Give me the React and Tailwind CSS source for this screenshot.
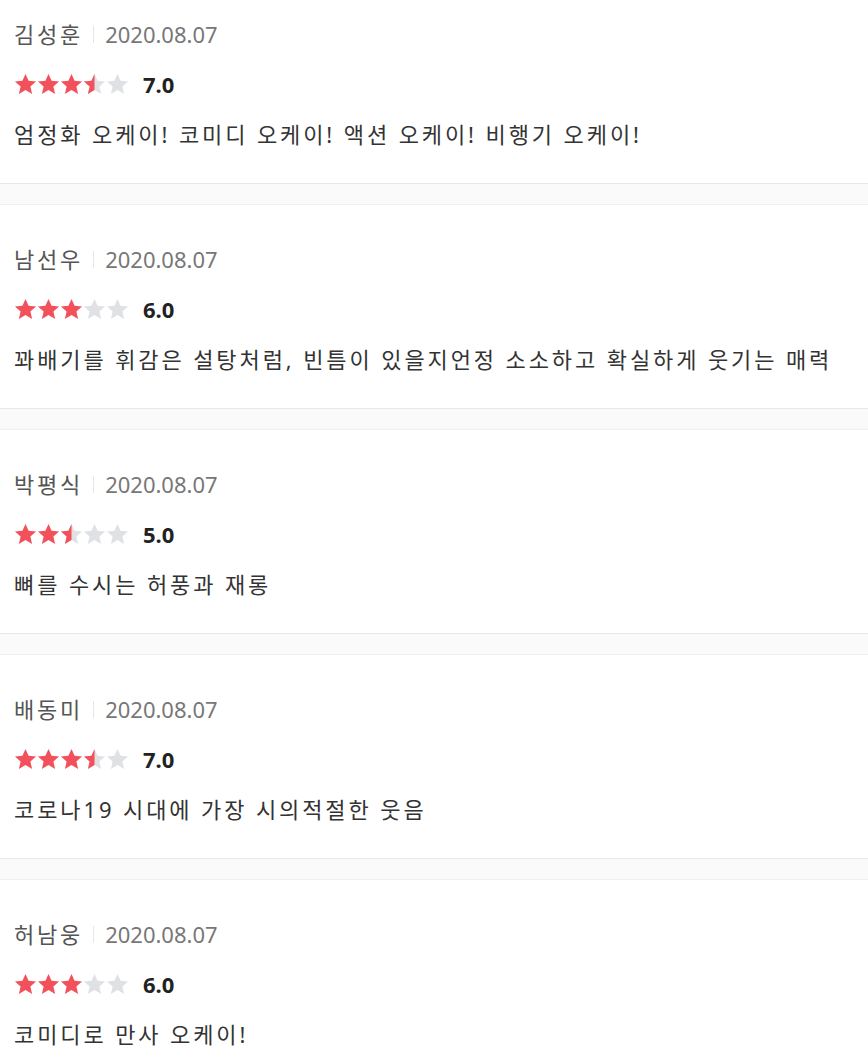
const reviews = [
  { name: "김성훈", date: "2020.08.07", score: 7, text: "엄정화 오케이! 코미디 오케이! 액션 오케이! 비행기 오케이!" },
  { name: "남선우", date: "2020.08.07", score: 6, text: "꽈배기를 휘감은 설탕처럼, 빈틈이 있을지언정 소소하고 확실하게 웃기는 매력" },
  { name: "박평식", date: "2020.08.07", score: 5, text: "뼈를 수시는 허풍과 재롱" },
  { name: "배동미", date: "2020.08.07", score: 7, text: "코로나19 시대에 가장 시의적절한 웃음" },
  { name: "허남웅", date: "2020.08.07", score: 6, text: "코미디로 만사 오케이!" },
];

const STAR = "M12 1l3.2 7.2 7.8.7-5.9 5.2 1.8 7.7L12 17.8l-6.9 4 1.8-7.7L1 8.9l7.8-.7z";

function Star({ fill, uid }) {
  // fill: 0, 0.5 or 1
  return (
    <svg width="23" height="23" viewBox="0 0 24 24" className="block">
      {fill === 0.5 && (
        <defs>
          <clipPath id={uid}>
            <rect x="0" y="0" width="12" height="24" />
          </clipPath>
        </defs>
      )}
      <path d={STAR} fill={fill === 1 ? "#f2505a" : "#dfe1e5"} />
      {fill === 0.5 && <path d={STAR} fill="#f2505a" clipPath={`url(#${uid})`} />}
    </svg>
  );
}

function Stars({ score, idx }) {
  const value = score / 2;
  return (
    <div className="flex items-center">
      {[1, 2, 3, 4, 5].map((i) => (
        <Star
          key={i}
          uid={`half-${idx}-${i}`}
          fill={value >= i ? 1 : value >= i - 0.5 ? 0.5 : 0}
        />
      ))}
    </div>
  );
}

function Review({ review, idx }) {
  return (
    <div className={`px-[14px] pb-[34px] ${idx === 0 ? "pt-[19px]" : "pt-[39px]"}`}>
      <div className="flex items-center h-[30px] text-[22px]">
        <span className="text-[#555] tracking-[2.8px]">{review.name}</span>
        <span className="w-px h-[17px] bg-[#e6e6e6] ml-[10px] mr-[11px]" />
        <span className="text-[#777]">{review.date}</span>
      </div>
      <div className="flex items-center h-[30px] mt-[20px]">
        <Stars score={review.score} idx={idx} />
        <span className="ml-[14px] text-[22px] font-bold text-[#222]">{review.score.toFixed(1)}</span>
      </div>
      <p className="h-[30px] mt-[20px] leading-[30px] text-[22px] tracking-[2.9px] text-[#333] whitespace-nowrap">
        {review.text}
      </p>
    </div>
  );
}

export default function App() {
  return (
    <div
      className="min-h-screen bg-white"
      style={{ fontFamily: '"Noto Sans", "Noto Sans CJK KR", sans-serif' }}
    >
      {reviews.map((r, i) => (
        <div key={r.name}>
          <Review review={r} idx={i} />
          {i < reviews.length - 1 && (
            <div className="h-[22px] bg-[#fafafa] border-t border-b border-t-[#e8e8e8] border-b-[#efefef]" />
          )}
        </div>
      ))}
    </div>
  );
}
